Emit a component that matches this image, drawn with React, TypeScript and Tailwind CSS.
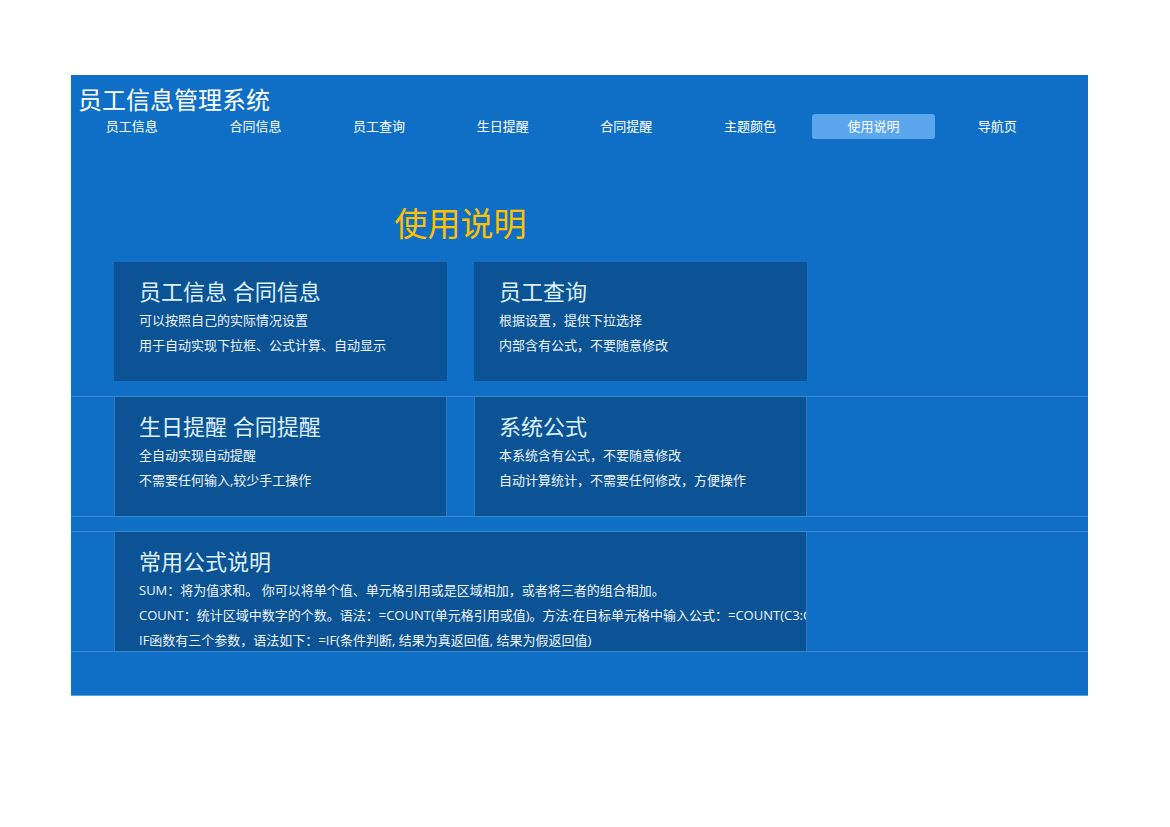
import React from "react";

// =========================
// DATA
// =========================
const NAV = [
  "员工信息",
  "合同信息",
  "员工查询",
  "生日提醒",
  "合同提醒",
  "主题颜色",
  "使用说明",
  "导航页",
];

const ACTIVE = "使用说明";

interface Card {
  title: string;
  lines: string[];
}

const ROW_ONE: Card[] = [
  {
    title: "员工信息 合同信息",
    lines: ["可以按照自己的实际情况设置", "用于自动实现下拉框、公式计算、自动显示"],
  },
  {
    title: "员工查询",
    lines: ["根据设置，提供下拉选择", "内部含有公式，不要随意修改"],
  },
];

const ROW_TWO: Card[] = [
  {
    title: "生日提醒 合同提醒",
    lines: ["全自动实现自动提醒", "不需要任何输入,较少手工操作"],
  },
  {
    title: "系统公式",
    lines: ["本系统含有公式，不要随意修改", "自动计算统计，不需要任何修改，方便操作"],
  },
];

const FORMULAS: Card = {
  title: "常用公式说明",
  lines: [
    "SUM：将为值求和。 你可以将单个值、单元格引用或是区域相加，或者将三者的组合相加。",
    "COUNT：统计区域中数字的个数。语法：=COUNT(单元格引用或值)。方法:在目标单元格中输入公式：=COUNT(C3:C9)",
    "IF函数有三个参数，语法如下：=IF(条件判断, 结果为真返回值, 结果为假返回值)",
  ],
};

// =========================
// CARD
// =========================
function InfoCard({ card, className }: { card: Card; className: string }) {
  return (
    <div
      className={`h-[119px] bg-[#0b5394] pt-[14px] overflow-hidden whitespace-nowrap ${className}`}
    >
      <p className="text-[22px] leading-[30px] text-[#dff1ff]">{card.title}</p>
      <div className="mt-[2px]">
        {card.lines.map((line) => (
          <p key={line} className="text-[13px] leading-[25px] text-[#eef4fb]">
            {line}
          </p>
        ))}
      </div>
    </div>
  );
}

// =========================
// PAGE
// =========================
export default function App() {
  return (
    <div
      className="w-[1170px] h-[827px] bg-white pt-[75px]"
      style={{ fontFamily: '"Open Sans", "Noto Sans CJK SC", sans-serif' }}
    >
      <div className="ml-[71px] w-[1017px] bg-[#0f6fc6] border-b border-[#5ea5e6]">

        {/* HEADER */}
        <div className="-ml-px w-[989px] pt-[11px]">
          <h1 className="pl-[8px] text-[24px] leading-[28px] text-white">
            员工信息管理系统
          </h1>
          <div className="grid grid-cols-8 h-[25px]">
            {NAV.map((item) => (
              <div key={item} className="flex justify-center">
                <span
                  className={`flex items-center justify-center w-[123px] h-[25px] pt-px rounded-[3px] text-[13px] text-white ${
                    item === ACTIVE ? "bg-[#5aa7ee]" : ""
                  }`}
                >
                  {item}
                </span>
              </div>
            ))}
          </div>
        </div>

        {/* TITLE */}
        <h2 className="mt-[65px] ml-[43px] w-[693px] text-center text-[33px] leading-[40px] text-[#ffc000]">
          使用说明
        </h2>

        {/* ROW 1 */}
        <div className="mt-[18px] pl-[43px] flex gap-[27px]">
          {ROW_ONE.map((c) => (
            <InfoCard key={c.title} card={c} className="w-[333px] pl-[25px]" />
          ))}
        </div>

        {/* ROW 2 */}
        <div className="mt-[15px] border-y border-[#3a86cc] pl-[43px] flex gap-[27px]">
          {ROW_TWO.map((c) => (
            <InfoCard
              key={c.title}
              card={c}
              className="w-[333px] pl-[24px] border-x border-[#2a78c0]"
            />
          ))}
        </div>

        {/* ROW 3 */}
        <div className="mt-[14px] border-y border-[#3a86cc] pl-[43px]">
          <InfoCard
            card={FORMULAS}
            className="w-[693px] pl-[24px] border-x border-[#2a78c0]"
          />
        </div>

        <div className="h-[43px]" />
      </div>
    </div>
  );
}
